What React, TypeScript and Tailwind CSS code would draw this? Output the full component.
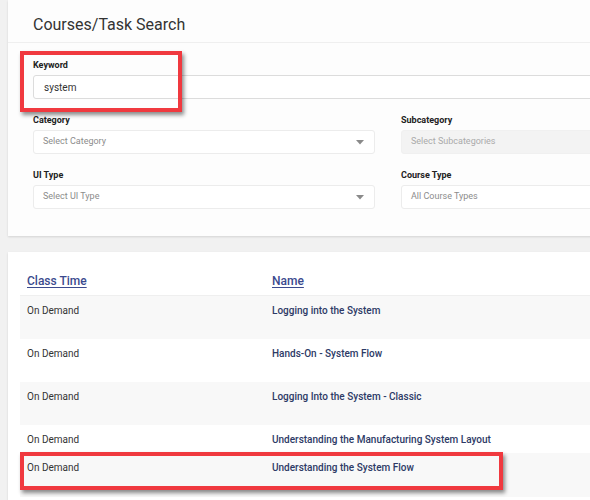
import React from 'react';

const rows = [
  { time: 'On Demand', name: 'Logging into the System', h: 'h-[43px]', striped: true },
  { time: 'On Demand', name: 'Hands-On - System Flow', h: 'h-[43px]', striped: false },
  { time: 'On Demand', name: 'Logging Into the System - Classic', h: 'h-[43px]', striped: true },
  { time: 'On Demand', name: 'Understanding the Manufacturing System Layout', h: 'h-[28px]', striped: false },
  { time: 'On Demand', name: 'Understanding the System Flow', h: 'h-[44px]', striped: true },
];

const Caret = () => (
  <svg width="8" height="5" viewBox="0 0 8 5" className="shrink-0">
    <path d="M0 0 L8 0 L4 4.5 Z" fill="#8a8a8a" />
  </svg>
);

const Field: React.FC<{ label: string; children: React.ReactNode }> = ({ label, children }) => (
  <div className="flex flex-col">
    <label className="text-[9px] font-bold leading-[12px] text-[#222] mb-[4px]">{label}</label>
    {children}
  </div>
);

const Select: React.FC<{ placeholder: string; disabled?: boolean; caret?: boolean }> = ({ placeholder, disabled, caret }) => (
  <div
    className={`h-[24px] rounded-[3px] border flex items-center justify-between pl-[9px] pr-[10px] text-[9px] ${
      disabled ? 'bg-[#f3f3f3] border-[#f0f0f0] text-[#aaa]' : 'bg-white border-[#ececec] text-[#8c8c8c]'
    }`}
  >
    <span>{placeholder}</span>
    {caret && <Caret />}
  </div>
);

export default function App() {
  return (
    <div
      className="relative w-[590px] h-[500px] overflow-hidden bg-[#f1f1f1]"
      style={{ fontFamily: 'Roboto, "Liberation Sans", sans-serif' }}
    >
      {/* search card */}
      <div className="ml-[8px] w-[760px] h-[236px] bg-[#fdfdfd] shadow-[0_1px_2px_rgba(0,0,0,0.12)]">
        <div className="h-[43px] px-[25px] pt-[7px] flex items-center border-b border-[#efefef]">
          <h1 className="text-[16px] text-[#333] leading-none">Courses/Task Search</h1>
        </div>
        <div className="px-[25px] pt-[16px]">
          <Field label="Keyword">
            <div className="h-[24px] rounded-[3px] border border-[#dcdcdc] bg-white flex items-center pl-[10px] text-[10px] text-[#333]">
              system
            </div>
          </Field>
          <div className="grid grid-cols-2 gap-x-[26px] gap-y-[15px] mt-[15px]">
            <Field label="Category">
              <Select placeholder="Select Category" caret />
            </Field>
            <Field label="Subcategory">
              <Select placeholder="Select Subcategories" disabled />
            </Field>
            <Field label="UI Type">
              <Select placeholder="Select UI Type" caret />
            </Field>
            <Field label="Course Type">
              <Select placeholder="All Course Types" />
            </Field>
          </div>
        </div>
      </div>

      {/* results card */}
      <div className="ml-[8px] mt-[16px] w-[760px] h-[300px] bg-white shadow-[0_1px_2px_rgba(0,0,0,0.12)] pt-[12px] px-[12px]">
        <div className="flex h-[32px] items-end pb-[5px] border-b border-[#efefef] text-[12px] font-medium text-[#3b4a8e]">
          <div className="w-[252px] pl-[7px] underline underline-offset-[2px]">Class Time</div>
          <div className="underline underline-offset-[2px]">Name</div>
        </div>
        {rows.map((r, i) => (
          <div key={i} className={`flex ${r.h} pt-[8px] text-[10px] leading-[13px] ${r.striped ? 'bg-[#f8f8f8]' : 'bg-white'}`}>
            <div className="w-[252px] pl-[7px] text-[#333]">{r.time}</div>
            <div className="font-medium text-[#2d3a66]">{r.name}</div>
          </div>
        ))}
      </div>

      {/* annotation boxes */}
      <div className="absolute left-[20px] top-[51px] w-[162px] h-[61px] border-[4px] border-[#f0393f] shadow-[2px_3px_4px_rgba(0,0,0,0.45)]" />
      <div className="absolute left-[20px] top-[452px] w-[483px] h-[38px] border-[4px] border-[#f0393f] shadow-[2px_3px_4px_rgba(0,0,0,0.45)]" />
    </div>
  );
}
